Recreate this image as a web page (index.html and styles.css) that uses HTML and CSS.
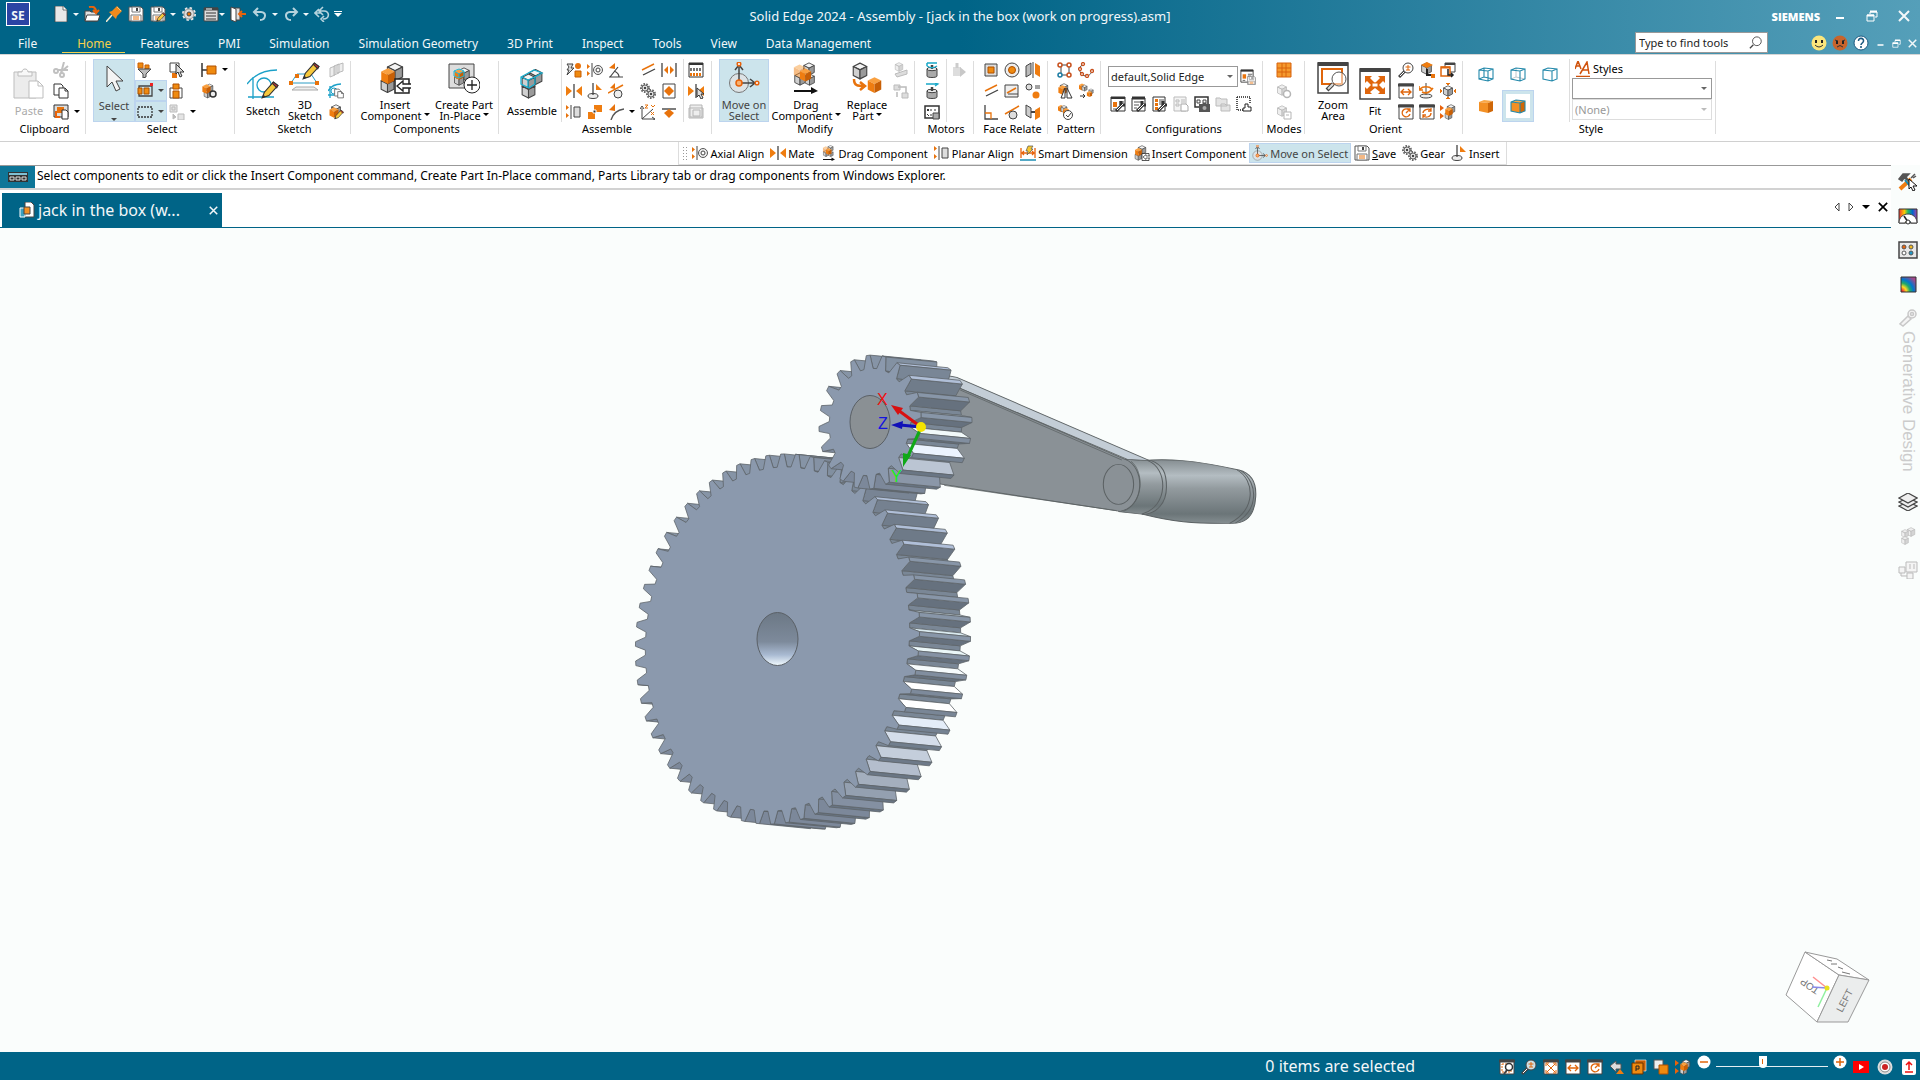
FILE: index.html
```html
<!DOCTYPE html>
<html lang="en">
<head>
    <meta charset="UTF-8">
    <meta name="viewport" content="width=device-width, initial-scale=1.0">
    <title>Solid Edge 2024 - Assembly</title>
    <link rel="stylesheet" href="styles.css">
</head>
<body>

<!-- icon sprite -->
<svg class="sprite" aria-hidden="true">
    <defs>
        <linearGradient id="metal" x1="0" y1="0" x2="0" y2="1">
            <stop offset="0" stop-color="#858d91"/><stop offset=".25" stop-color="#b4bdc2"/>
            <stop offset=".45" stop-color="#939b9f"/><stop offset=".85" stop-color="#6b7578"/><stop offset="1" stop-color="#858e91"/>
        </linearGradient>
        <linearGradient id="bore" x1="0" y1="0" x2="0" y2="1">
            <stop offset="0" stop-color="#6c7885"/><stop offset=".55" stop-color="#7d8a9b"/>
            <stop offset=".8" stop-color="#a9bad2"/><stop offset="1" stop-color="#f2fbff"/>
        </linearGradient>
        <linearGradient id="rainbow">
            <stop offset="0" stop-color="#e33"/><stop offset=".3" stop-color="#fc0"/><stop offset=".5" stop-color="#2b6"/>
            <stop offset=".75" stop-color="#06c"/><stop offset="1" stop-color="#a4a"/>
        </linearGradient>
        <radialGradient id="stress" cx="0" cy="1" r="1.2">
            <stop offset=".1" stop-color="#e33"/><stop offset=".3" stop-color="#fd2"/><stop offset=".5" stop-color="#2a6"/>
            <stop offset=".7" stop-color="#07c"/><stop offset="1" stop-color="#a3488c"/>
        </radialGradient>
    </defs>

    <symbol id="cube-o" viewBox="0 0 16 16"><path fill="#f9a040" d="M8 1l6 3-6 3-6-3z"/><path fill="#ef7d10" d="M2 4l6 3v8l-6-3z"/><path fill="#c85f05" d="M14 4v8l-6 3V7z"/></symbol>
    <symbol id="cube-g" viewBox="0 0 16 16"><g stroke="#444" stroke-linejoin="round"><path fill="#f4f4f4" d="M8 1l6 3-6 3-6-3z"/><path fill="#d0d0d0" d="M2 4l6 3v8l-6-3z"/><path fill="#9a9a9a" d="M14 4v8l-6 3V7z"/></g></symbol>
    <symbol id="cube-l" viewBox="0 0 16 16"><g stroke="#b8b8b8" stroke-linejoin="round" fill="#eee"><path d="M8 1l6 3-6 3-6-3zM2 4l6 3v8l-6-3z"/><path fill="#d4d4d4" d="M14 4v8l-6 3V7z"/></g></symbol>
    <symbol id="pencil" viewBox="0 0 16 16"><path d="M1 15l2-5 8-9 4 3-8 9z" fill="#f6c83c" stroke="#333"/><path d="M10 2l1-1 4 3-1 2z" fill="#d33" stroke="#333"/><path d="M1 15l1-3 2 2z" fill="#333"/></symbol>
    <symbol id="caret" viewBox="0 0 6 3"><path d="M0 0h6L3 3z" fill="currentColor"/></symbol>
    <symbol id="lens" viewBox="0 0 16 16"><path d="M1 15l6-6" stroke="#444" stroke-width="3"/><path d="M2 14l5-5" stroke="#fff"/><circle cx="10" cy="6" r="5" fill="#fffc" stroke="#444"/></symbol>

    <!-- quick access -->
    <symbol id="new" viewBox="0 0 16 16"><path d="M2 0h8l4 4v12H2z" fill="#e8e8e8" stroke="#444" stroke-width=".8"/><path d="M10 0v4h4" fill="#fff" stroke="#555" stroke-width=".8"/></symbol>
    <symbol id="open" viewBox="0 0 16 16"><path d="M1 5h5l1 1h6v9H1z" fill="#e0e0e0" stroke="#444"/><path d="M3 9h13l-2 6H1z" fill="#fff" stroke="#444"/><path d="M5 1c5-1 7 1 7 5M9 4l3 3 3-3" fill="none" stroke="#e8630c" stroke-width="2"/></symbol>
    <symbol id="pin" viewBox="0 0 16 16"><path d="M0 16l6-7" stroke="#f3ead0" stroke-width="1.5"/><path d="M3 6l3-1 4-4 1-1 5 5-1 1-4 4-1 3z" fill="#f08a1c"/><path d="M11 1l4 4" stroke="#ffc070"/></symbol>
    <symbol id="save" viewBox="0 0 16 16"><path d="M1 1h12l2 2v12H1z" fill="#fff" stroke="#555"/><path d="M4 1h8v5H4zM3 9h10v6H3z" fill="#fff" stroke="#777"/><path d="M9 2v3" stroke="#444" stroke-width="2"/><path d="M5 11h6M5 13h6" stroke="#e8730c"/></symbol>
    <symbol id="saveas" viewBox="0 0 16 16"><use href="#save"/><use href="#pencil" x="6" y="6" width="10" height="10"/></symbol>
    <symbol id="cog" viewBox="0 0 16 16"><circle cx="8" cy="8" r="5.5" fill="#d8d8d8" stroke="#e8e8e8" stroke-width="3" stroke-dasharray="2.2 2.1"/><circle cx="8" cy="8" r="5" fill="#ddd" stroke="#666" stroke-width=".6"/><circle cx="8" cy="8" r="2" fill="#e8730c" stroke="#444"/></symbol>
    <symbol id="panel" viewBox="0 0 16 16"><path d="M1 2h14v13H1z" fill="#ddd" stroke="#444"/><path d="M1 3h14" stroke="#444" stroke-width="3"/><path d="M3 3h6" stroke="#fff"/><path d="M3 7h10M3 10h10M3 13h10" stroke="#333"/></symbol>
    <symbol id="exit" viewBox="0 0 16 16"><path d="M1 2h9v12H1z" fill="#ddd" stroke="#444"/><path d="M1 1l5 2v13l-5-2z" fill="#fff" stroke="#444"/><path d="M16 8H9M12 5L9 8l3 3" fill="none" stroke="#e8630c" stroke-width="2"/></symbol>
    <symbol id="undo" viewBox="0 0 16 16"><path d="M6 2L2 6l4 4M2 6h7c6 0 5 8-1 8" fill="none" stroke="#b5d3dd" stroke-width="2"/></symbol>
    <symbol id="redo" viewBox="0 0 16 16"><path d="M10 2l4 4-4 4M14 6H7c-6 0-5 8 1 8" fill="none" stroke="#b5d3dd" stroke-width="2"/></symbol>
    <symbol id="undos" viewBox="0 0 16 16"><path d="M5 3L1 7l4 4M1 7h6M9 1L5 5l4 4M5 5h5c6 0 6 8-1 8M10 10l-3 3 3 3" fill="none" stroke="#b5d3dd" stroke-width="1.6"/></symbol>

    <!-- window controls -->
    <symbol id="w-min" viewBox="0 0 12 12"><path d="M2 8h8" stroke="#fff" stroke-width="2"/></symbol>
    <symbol id="w-max" viewBox="0 0 12 12"><path d="M4 4V2h7v5H9" fill="none" stroke="#fff"/><path d="M4 1.500h7M1 5.500h7" stroke="#fff" stroke-width="2"/><path d="M1 5h7v6H1z" fill="none" stroke="#fff"/></symbol>
    <symbol id="w-close" viewBox="0 0 12 12"><path d="M1 1l10 10M11 1L1 11" stroke="currentColor" stroke-width="2"/></symbol>
    <symbol id="smile" viewBox="0 0 16 16"><circle cx="8" cy="8" r="7.500" fill="#fbe67c"/><path d="M4 10q4 4 8 0" fill="none" stroke="#333"/><path d="M5 5v3M11 5v3" stroke="#222" stroke-width="2"/></symbol>
    <symbol id="frown" viewBox="0 0 16 16"><circle cx="8" cy="8" r="7.500" fill="#c8642c"/><path d="M5 12q3-3 6 0M3 5l3 1M13 5l-3 1" fill="none" stroke="#333"/><path d="M5 6v3M11 6v3" stroke="#222" stroke-width="2"/></symbol>
    <symbol id="help" viewBox="0 0 16 16"><circle cx="8" cy="8" r="7" fill="#fff" stroke="#1c5a80"/><path d="M5.500 6c0-4 5.500-3 5 0 0 2-2.500 2-2.500 4M8 11v2" fill="none" stroke="#1c5a80" stroke-width="1.600"/></symbol>
    <symbol id="search" viewBox="0 0 16 16"><circle cx="9" cy="6" r="5" fill="none" stroke="#444"/><path d="M5 10l-4 4" stroke="#444" stroke-width="1.500"/></symbol>

    <!-- clipboard / select -->
    <symbol id="paste" viewBox="0 0 32 32"><g fill="#ececec" stroke="#bdbdbd"><path d="M1 4h22v26H1z"/><path fill="#f8f8f8" d="M5 8V4h4c0-4 6-4 6 0h4v4z"/><path fill="#fff" d="M16 13h9l5 5v12H16zM25 13v5h5"/></g></symbol>
    <symbol id="cut" viewBox="0 0 16 16"><g fill="none" stroke="#c0c0c0" stroke-width="2"><circle cx="3" cy="9" r="2"/><circle cx="9" cy="13" r="2"/><path d="M5 8h10M8 11L11 0M9 9l6-5"/></g></symbol>
    <symbol id="copy" viewBox="0 0 16 16"><g fill="#fff" stroke="#333"><path d="M1 1h7l2 2v9H1z"/><path d="M6 5h6l3 3v7H6zM12 5v3h3"/></g></symbol>
    <symbol id="pastesp" viewBox="0 0 16 16"><path d="M1 1h14v12H1z" fill="#ddd" stroke="#333"/><path d="M4 3h7v6H4z" fill="#e8730c"/><path d="M3 7v6h4" fill="none" stroke="#e8630c" stroke-width="2"/><path d="M9 6h4l2 2v7H9z" fill="#fff" stroke="#333"/></symbol>
    <symbol id="arrow" viewBox="0 0 32 32"><path d="M9 3v21l5-5 4 9 4-2-4-8h7z" fill="#f4f4f4" stroke="#444" stroke-linejoin="round"/></symbol>
    <symbol id="filter" viewBox="0 0 16 16"><path d="M1 1h5v5H1zM8 3h4v4H8z" fill="#ef8a10" stroke="#c85f05"/><path d="M1 7h13l-5 5v3l-3 1v-4z" fill="#bbb" stroke="#444"/></symbol>
    <symbol id="selbox" viewBox="0 0 16 16"><path d="M2 3h13v10H2z" fill="none" stroke="#444" stroke-width="1.300"/><path d="M1 5h4v6H1zM7 5h5v6H7z" fill="#ef8a10" stroke="#a85000"/><path d="M13 0h3v3h-3z" fill="#e22"/></symbol>
    <symbol id="fence" viewBox="0 0 16 16"><path d="M1 3h14v10H1z" fill="none" stroke="#333" stroke-width="1.300" stroke-dasharray="2 1"/></symbol>
    <symbol id="seltop" viewBox="0 0 16 16"><path d="M1 1h9v9H1z" fill="#fff" stroke="#444"/><path d="M3 11h5v5H3z" fill="#e8730c"/><path d="M7 2v10l2-2 2 5 2-1-2-4h4z" fill="#ddd" stroke="#333"/></symbol>
    <symbol id="selstack" viewBox="0 0 16 16"><path d="M1 5h12v10H1z" fill="none" stroke="#444"/><path d="M4 1h6v5H4zM4 8h6v7H4z" fill="#ef8a10" stroke="#b05000"/></symbol>
    <symbol id="selgray" viewBox="0 0 16 16"><g fill="#e4e4e4" stroke="#bbb"><path d="M1 1h7v7H1zM3 3h3v3H3zM9 10h6v6H9z"/><path fill="#bbb" d="M4 10l3 3-3 2z"/></g></symbol>
    <symbol id="selnext" viewBox="0 0 16 16"><path d="M1 1v14M1 8h5" stroke="#333" stroke-width="1.500"/><path d="M6 4h9v8H6z" fill="#ef8a10" stroke="#b05000"/></symbol>
    <symbol id="selgear" viewBox="0 0 16 16"><use href="#cube-g" x="4" y="0" width="9" height="10"/><use href="#cube-g" y="6" x="2" width="9" height="10"/><use href="#cube-o" width="11" height="12"/><circle cx="12" cy="11" r="3" fill="#eee" stroke="#333" stroke-width="1.500"/></symbol>

    <!-- sketch / components -->
    <symbol id="sketch" viewBox="0 0 32 32"><g fill="none" stroke="#1ba0c8" stroke-width="1.300"><path d="M6 31V9M1 29h26M0 16C8 6 18 2 30 2"/><circle cx="17" cy="17" r="7"/></g><use href="#pencil" x="14" y="13" width="18" height="18"/></symbol>
    <symbol id="sketch3d" viewBox="0 0 32 32"><path d="M2 21L8 12h14l6 9z" fill="none" stroke="#2c9cc4"/><path d="M7 25h18l4 3H3z" fill="#eee" stroke="#aaa"/><path d="M0 19h4v4H0zM6 12h4v4H6zM26 19h4v4h-4z" fill="#e8730c"/><use href="#pencil" x="13" y="0" width="18" height="18"/></symbol>
    <symbol id="planes" viewBox="0 0 16 16"><path d="M2 6l5-2v9l-5 2zM6 4l5-2v9l-5 2zM9 3l6-2v8l-6 2z" fill="#eee" stroke="#bbb"/></symbol>
    <symbol id="skcopy" viewBox="0 0 16 16"><path d="M2 15V3M0 12h6M0 8C3 3 8 1 13 1" fill="none" stroke="#1ba0c8" stroke-width="1.300"/><circle cx="6" cy="8" r="3" fill="none" stroke="#1ba0c8"/><use href="#copy" x="6" y="5" width="10" height="11"/></symbol>
    <symbol id="cubepen" viewBox="0 0 16 16"><use href="#cube-g" x="2" width="12" height="12"/><use href="#cube-o" y="2" width="12" height="13"/><use href="#pencil" x="6" y="5" width="10" height="11"/></symbol>
    <symbol id="insert" viewBox="0 0 32 32"><use href="#cube-g" x="6" width="20" height="20"/><use href="#cube-g" y="14" width="17" height="18"/><use href="#cube-o" y="5" width="18" height="18"/><path d="M16 17h14v14H16z" fill="#fff" stroke="#222" stroke-width="1.500"/><path d="M32 22h-8v-3l-6 5 6 5v-3h8" fill="#fff" stroke="#222" stroke-width="1.300"/></symbol>
    <symbol id="create" viewBox="0 0 32 32"><path d="M1 2h25v24H1z" fill="#ddd" stroke="#444"/><use href="#cube-g" x="9" y="4" width="14" height="16"/><use href="#cube-g" x="5" y="12" width="12" height="12"/><use href="#cube-o" x="5" y="6" width="12" height="13"/><path d="M6 9l5-2 5 2v5l-5 2-5-2zM6 9l5 3 5-3M11 12v4" fill="none" stroke="#20b8d8"/><circle cx="24" cy="23" r="8" fill="#fff" stroke="#222"/><path d="M24 18v10M19 23h10" stroke="#222" stroke-width="1.300"/></symbol>
    <symbol id="assemble" viewBox="0 0 32 32"><use href="#cube-g" x="11" y="0" width="17" height="18"/><use href="#cube-g" x="3" y="14" width="19" height="17"/><use href="#cube-g" x="3" y="5" width="19" height="17"/><path d="M5 9l13-7 8 3-7 4v7l-6 4-8-4zM5 9l7 3 7-3M12 12v8" fill="none" stroke="#1bb0d0" stroke-width="1.300"/></symbol>

    <!-- assemble relations -->
    <symbol id="flash" viewBox="0 0 16 16"><path d="M1 2h6L5 6h3l-7 7 2-5H1l2-3z" fill="#ddd" stroke="#444"/><circle cx="12" cy="4" r="3" fill="#e8730c"/><path d="M9 9h6v6H9z" fill="#ef8a10" stroke="#c85f05"/></symbol>
    <symbol id="axial" viewBox="0 0 16 16"><path d="M0 2l3 2.500L0 7zM0 9l3 2.500L0 14z" fill="#e8730c"/><path d="M5 1v14" stroke="#444"/><circle cx="11" cy="8" r="4.500" fill="#eee" stroke="#555"/><circle cx="11" cy="8" r="2" fill="#fff" stroke="#444"/></symbol>
    <symbol id="angle" viewBox="0 0 16 16"><path d="M1 15h14M2 15l8-10M6 9q5 2 5 6" fill="none" stroke="#444" stroke-width="1.200"/><path d="M1 6l6-5v6z" fill="#e8730c"/></symbol>
    <symbol id="parallel" viewBox="0 0 16 16"><path d="M2 8l12-6" stroke="#e8730c" stroke-width="1.500"/><path d="M3 13l12-6" stroke="#444" stroke-width="1.300"/></symbol>
    <symbol id="center" viewBox="0 0 16 16"><path d="M1 1v14M15 1v14" stroke="#444" stroke-width="1.300"/><path d="M3 8l4-4v8zM13 8L9 4v8z" fill="#e8730c"/></symbol>
    <symbol id="mate" viewBox="0 0 16 16"><path d="M0 3l6 5-6 5zM16 3l-6 5 6 5z" fill="#ef7d10"/><path d="M8 1v14" stroke="#444" stroke-width="1.300"/></symbol>
    <symbol id="ins" viewBox="0 0 16 16"><ellipse cx="6" cy="13" rx="5" ry="2.500" fill="#eee" stroke="#444"/><path d="M6 0v12" stroke="#444" stroke-width="1.300"/><path d="M9 1l6 6H9z" fill="#ef7d10"/></symbol>
    <symbol id="tangent" viewBox="0 0 16 16"><path d="M0 10L15 2" stroke="#e8730c" stroke-width="1.500"/><path d="M2 5l5-5v6z" fill="#e8730c"/><circle cx="10" cy="11" r="4" fill="#eee" stroke="#444"/></symbol>
    <symbol id="gears" viewBox="0 0 16 16"><g fill="none" stroke="#666" stroke-width="2" stroke-dasharray="1.600 1.200"><circle cx="5" cy="5" r="4"/><circle cx="11" cy="11" r="4"/></g><g fill="#ddd" stroke="#666"><circle cx="5" cy="5" r="3"/><circle cx="11" cy="11" r="3"/></g><path d="M5 4v2M11 10v2" stroke="#444" stroke-width="2"/></symbol>
    <symbol id="centerbox" viewBox="0 0 16 16"><path d="M2 1h12v14H2z" fill="#fff" stroke="#444"/><path d="M8 3l5 5-5 5-5-5z" fill="#e8730c"/></symbol>
    <symbol id="planar" viewBox="0 0 16 16"><path d="M0 1l3 2.500L0 6zM0 9l3 2.500L0 14z" fill="#e8730c"/><path d="M5 1v14" stroke="#444"/><path d="M8 3h6v10H8z" fill="#ddd" stroke="#444"/></symbol>
    <symbol id="connect" viewBox="0 0 16 16"><path d="M7 1h8v7H7zM1 8h7v7H1z" fill="#ef7d10"/><path d="M6 6h3v3H6z" fill="#333" stroke="#fff"/></symbol>
    <symbol id="path" viewBox="0 0 16 16"><path d="M3 16C5 9 9 6 16 5" fill="none" stroke="#555" stroke-width="1.400"/><path d="M1 6l6-6v7z" fill="#e8730c"/></symbol>
    <symbol id="csys" viewBox="0 0 16 16"><path d="M2 4v11h12M2 15L13 5M0 5l2-3 2 3M12 13l3 2-3 2" fill="none" stroke="#444"/><path d="M5 1h3L5 4h3M11 1l2 2 2-2M11 8l3 3M14 8l-3 3" fill="none" stroke="#e8730c"/></symbol>
    <symbol id="plane" viewBox="0 0 16 16"><path d="M1 5h14" stroke="#444" stroke-width="1.400"/><path d="M8 5l5 4-5 5-5-5z" fill="#e8730c"/></symbol>
    <symbol id="relgrid" viewBox="0 0 16 16"><path d="M1 1h14v14H1z" fill="#fff" stroke="#333"/><path d="M1 2h14" stroke="#333" stroke-width="2"/><path d="M3 6v3M6 6v3M9 6v3M12 6v3" stroke="#444" stroke-width="1.500"/><path d="M3 11v3M6 11v3M9 11v3M12 11v3" stroke="#e8730c" stroke-width="2"/></symbol>
    <symbol id="matesel" viewBox="0 0 16 16"><use href="#mate"/><path d="M9 5v9l2-2 2 4 2-1-2-4h3z" fill="#ddd" stroke="#333"/></symbol>
    <symbol id="relgray" viewBox="0 0 16 16"><path d="M2 1h12v12H2zM1 4h14v10H1zM5 6h7v6H5z" fill="#eee" stroke="#b5b5b5"/></symbol>

    <!-- modify / motors -->
    <symbol id="move" viewBox="0 0 32 32"><circle cx="11" cy="21" r="9.500" fill="#dde3e6" stroke="#777"/><path d="M11 19V5M7 8l4-5 4 5M12 21h14M22 17l5 4-5 4" fill="none" stroke="#444" stroke-width="1.500"/><g fill="#fff" stroke="#e8630c" stroke-width="1.500"><circle cx="11" cy="2" r="1.800"/><circle cx="29" cy="21" r="1.800"/><circle cx="11" cy="21" r="3" fill="#f8b070"/></g></symbol>
    <symbol id="drag" viewBox="0 0 32 32"><use href="#cube-g" x="12" y="0" width="14" height="14"/><use href="#cube-g" x="13" y="10" width="13" height="15"/><use href="#cube-g" x="3" y="10" width="14" height="14"/><use href="#cube-o" x="2" y="1" width="15" height="16" opacity=".5"/><use href="#cube-o" x="8" y="5" width="15" height="16"/><path d="M4 28h17v-3l7 4-7 3v-2H4z" fill="#111"/></symbol>
    <symbol id="replace" viewBox="0 0 32 32"><use href="#cube-g" x="-1" y="0" width="20" height="18"/><use href="#cube-o" x="14" y="14" width="19" height="18"/><path d="M3 17c0 7 4 7 10 7M9 20l5 4-5 4" fill="none" stroke="#e8730c" stroke-width="2.500"/></symbol>
    <symbol id="graycubes" viewBox="0 0 16 16"><use href="#cube-l" x="1" width="10" height="10"/><path d="M2 12l12-4v4L4 15z" fill="#ddd" stroke="#bbb"/></symbol>
    <symbol id="graymove" viewBox="0 0 16 16"><path d="M1 2h6v5H1zM9 10h6v5H9z" fill="#ddd" stroke="#bbb"/><path d="M4 14V9M5 4h8v6" fill="none" stroke="#bbb" stroke-width="1.500"/></symbol>
    <symbol id="motor" viewBox="0 0 16 16"><path d="M3 7c0-2 10-2 10 0v7c0 2-10 2-10 0z" fill="#aaa" stroke="#444"/><ellipse cx="8" cy="7" rx="5" ry="1.700" fill="#eee" stroke="#444"/><path d="M8 7V3" stroke="#444" stroke-width="2.500"/><path d="M3 1h10M3 4c3 2 7 2 10 0M3 1v3" fill="none" stroke="#19a8c8" stroke-width="1.500"/></symbol>
    <symbol id="motor2" viewBox="0 0 16 16"><path d="M3 8c0-2 10-2 10 0v6c0 2-10 2-10 0z" fill="#aaa" stroke="#444"/><ellipse cx="8" cy="8" rx="5" ry="1.700" fill="#eee" stroke="#444"/><path d="M8 8V4" stroke="#444" stroke-width="2.500"/><path d="M2 1h11M11 0l3 1-3 2" fill="none" stroke="#19a8c8" stroke-width="1.300"/></symbol>
    <symbol id="vartab" viewBox="0 0 16 16"><path d="M1 2h14v12H1z" fill="#fff" stroke="#333" stroke-width="1.500"/><path d="M3 5l2 2M5 5L3 7M3 10l2 2M7 5v2M10 6h2M7 10v2" stroke="#333"/><path d="M9 9h6v6H9z" fill="#aaa" stroke="#444"/></symbol>
    <symbol id="playgray" viewBox="0 0 16 16"><path d="M2 5h8v9H2z" fill="#ddd"/><path d="M6 1v5" stroke="#ccc" stroke-width="3"/><path d="M9 5l6 5-6 5z" fill="#c8c8c8"/></symbol>

    <!-- face relate / pattern -->
    <symbol id="f-cop" viewBox="0 0 16 16"><path d="M2 2h12v12H2z" fill="#ddd" stroke="#444"/><path d="M5 5h6v6H5z" fill="#ef8a10" stroke="#b05000"/></symbol>
    <symbol id="f-con" viewBox="0 0 16 16"><circle cx="8" cy="8" r="7" fill="#eee" stroke="#444"/><circle cx="8" cy="8" r="3.500" fill="#ef8a10" stroke="#b05000"/></symbol>
    <symbol id="f-sym" viewBox="0 0 16 16"><path d="M1 4l5-3v11l-5 3z" fill="#bbb" stroke="#444"/><path d="M8 0v16" stroke="#444"/><path d="M10 1l5 3v11l-5-3z" fill="#ef7d10"/></symbol>
    <symbol id="f-off" viewBox="0 0 16 16"><path d="M1 2h13v12H1z" fill="#eee" stroke="#444"/><path d="M3 10l9-5" stroke="#e8730c" stroke-width="1.500"/><path d="M4 11h10" stroke="#444"/></symbol>
    <symbol id="f-eq" viewBox="0 0 16 16"><circle cx="4" cy="4" r="3" fill="#ddd" stroke="#444"/><path d="M10 3h5M10 5h5" stroke="#444"/><circle cx="11" cy="12" r="3.500" fill="#ef7d10"/></symbol>
    <symbol id="f-perp" viewBox="0 0 16 16"><path d="M2 1v14h13" fill="none" stroke="#444" stroke-width="1.300"/><path d="M2 9h6v6" fill="none" stroke="#e8730c" stroke-width="1.300"/></symbol>
    <symbol id="f-tan" viewBox="0 0 16 16"><path d="M1 10L15 2" stroke="#e8730c" stroke-width="1.500"/><circle cx="9" cy="11" r="4" fill="#ddd" stroke="#444"/></symbol>
    <symbol id="f-par" viewBox="0 0 16 16"><path d="M1 1l5 3v10l-5-3z" fill="#ccc" stroke="#444"/><path d="M6 8h5" stroke="#444" stroke-width="2"/><path d="M10 6l5-3v10l-5 3z" fill="#ef7d10"/></symbol>
    <symbol id="p-rect" viewBox="0 0 16 16"><path d="M4 3h8M4 13h8M4 3v10M12 3v10" stroke="#444"/><g fill="#fff" stroke="#c8501c" stroke-width="1.500"><circle cx="3" cy="3" r="2"/><circle cx="12" cy="3" r="2"/><circle cx="12" cy="13" r="2"/><circle cx="3" cy="13" r="2" stroke="#1b7ca3"/></g></symbol>
    <symbol id="p-curve" viewBox="0 0 16 16"><path d="M5 2C-1 6 2 14 8 14c4 0 5-3 6-5" fill="none" stroke="#444"/><g fill="#fff" stroke="#c8501c" stroke-width="1.300"><circle cx="5" cy="2" r="1.500"/><circle cx="2" cy="7" r="1.500"/><circle cx="4" cy="12" r="1.500"/><circle cx="9" cy="14" r="1.500"/><circle cx="14" cy="9" r="1.500"/></g></symbol>
    <symbol id="p-mirror" viewBox="0 0 16 16"><use href="#cube-g" x="2" width="10" height="10"/><use href="#cube-o" y="1" width="11" height="12"/><path d="M8 15V5l-4 10zM10 15V5l5 10z" fill="#fff" stroke="#333"/></symbol>
    <symbol id="p-dup" viewBox="0 0 16 16"><use href="#cube-o" width="8" height="8"/><use href="#cube-g" x="3" y="1" width="7" height="8"/><use href="#cube-g" x="10" y="5" width="6" height="7"/><use href="#cube-o" x="8" y="7" width="7" height="8"/><path d="M2 13h4M5 11l2 2-2 2" fill="none" stroke="#333"/></symbol>
    <symbol id="p-check" viewBox="0 0 16 16"><use href="#cube-o" width="8" height="9"/><use href="#cube-g" x="3" y="1" width="8" height="8"/><use href="#cube-o" x="5" y="3" width="8" height="9"/><circle cx="11" cy="11" r="4.500" fill="#fff" stroke="#444"/><path d="M9 11l2 2 3-4" fill="none" stroke="#444"/></symbol>

    <!-- configurations / modes -->
    <symbol id="wrench" viewBox="0 0 16 16"><path d="M6 15l7-7M11 5v4h4" fill="none" stroke="#333" stroke-width="3"/><path d="M7 14l6-6" stroke="#fff"/></symbol>
    <symbol id="cfg" viewBox="0 0 16 16"><path d="M1 1h14v14H1z" fill="#fff" stroke="#333"/><path d="M1 2h14" stroke="#333" stroke-width="2"/><path d="M3 6h4v5H3z" fill="#e8730c"/><path d="M9 6h5M9 8h4M3 13h3" stroke="#555"/></symbol>
    <symbol id="cfg-save" viewBox="0 0 16 16"><use href="#cfg" width="14" height="14"/><use href="#save" x="7" y="7" width="9" height="9"/></symbol>
    <symbol id="cfg-tool" viewBox="0 0 16 16"><use href="#cfg"/><use href="#wrench"/></symbol>
    <symbol id="cfg-edit" viewBox="0 0 16 16"><path d="M1 2h13v13H1z" fill="#fff" stroke="#333"/><path d="M1 2h13" stroke="#333" stroke-width="3"/><path d="M3 6h8M3 9h5M3 12h3" stroke="#555"/><use href="#wrench"/></symbol>
    <symbol id="cfg-list" viewBox="0 0 16 16"><path d="M1 1h12v14H1z" fill="#fff" stroke="#333"/><path d="M3 3h3v3H3zM3 7h3v3H3zM3 11h3v3H3z" fill="#e8730c"/><path d="M7 4h5M7 6h4M7 8h3" stroke="#555"/><use href="#wrench"/></symbol>
    <symbol id="cfg-gray" viewBox="0 0 16 16"><path d="M1 1h12v14H1z" fill="#f4f4f4" stroke="#bbb"/><path d="M3 4h3v2H3zM3 8h3v2H3zM8 4h4M8 6h4" stroke="#bbb" fill="none"/><path d="M8 8h5l2 2v5H8z" fill="#fff" stroke="#aaa"/></symbol>
    <symbol id="cfg-cam" viewBox="0 0 16 16"><path d="M1 1h13v10H1z" fill="#fff" stroke="#333" stroke-width="1.500"/><path d="M3 4h3v3H3zM9 4h3v3H9z" fill="none" stroke="#444"/><path d="M5 8h3l1-1h3l1 1h3v8H5z" fill="#555"/><circle cx="10.500" cy="12" r="2" fill="#aaa"/></symbol>
    <symbol id="cfg-fold" viewBox="0 0 16 16"><path d="M1 2h4l1 1h6v7H1zM6 8h4l1 1h4v6H6z" fill="#e4e4e4" stroke="#bbb"/></symbol>
    <symbol id="cfg-zone" viewBox="0 0 16 16"><path d="M1 1h13v6M1 1v13h6" fill="none" stroke="#222" stroke-width="1.500" stroke-dasharray="1 1"/><path d="M9 8h3v3h3v4H7v-3h2z" fill="#fff" stroke="#222"/></symbol>
    <symbol id="m-grid" viewBox="0 0 16 16"><path d="M1 1h14v14H1z" fill="#f59a2e" stroke="#d8620c"/><path d="M1 6h14M1 10h14M6 1v14M10 1v14" stroke="#d8620c"/></symbol>
    <symbol id="m-ref" viewBox="0 0 16 16"><use href="#cube-l" width="12" height="14"/><circle cx="11" cy="11" r="3.500" fill="#fff" stroke="#b5b5b5" stroke-width="1.500"/></symbol>
    <symbol id="m-save" viewBox="0 0 16 16"><use href="#cube-l" width="12" height="14"/><path d="M8 8h7v7H8zM10 11h3" fill="#fff" stroke="#b5b5b5"/></symbol>

    <!-- orient -->
    <symbol id="zoomarea" viewBox="0 0 32 32"><path d="M1 1h30v30H1z" fill="#fff" stroke="#444" stroke-width="1.500"/><path d="M1 2h30" stroke="#444" stroke-width="4"/><path d="M5 7h20v15H5z" fill="none" stroke="#e0660c" stroke-width="2"/><path d="M10 28l6-6" stroke="#444" stroke-width="4"/><path d="M11 27l5-5" stroke="#ddd" stroke-width="2"/><circle cx="22" cy="17" r="7" fill="#fff8" stroke="#555"/></symbol>
    <symbol id="fit" viewBox="0 0 32 32"><path d="M1 1h30v30H1z" fill="#fff" stroke="#444" stroke-width="1.500"/><path d="M1 2h30" stroke="#444" stroke-width="4"/><path d="M6 8h7l-2 2 5 5 5-5-2-2h7v7l-2-2-4 4 4 4 2-2v7h-7l2-2-5-4-5 4 2 2H6v-7l2 2 4-4-4-4-2 2z" fill="#e0660c"/><path d="M13 15h6v4h-6z" fill="#fff" stroke="#e0660c"/></symbol>
    <symbol id="o-zoom" viewBox="0 0 16 16"><use href="#lens"/><path d="M10 3v5M7.500 5h5M8 8h4" stroke="#e0660c"/></symbol>
    <symbol id="o-look" viewBox="0 0 16 16"><use href="#cube-g" x="1" width="13" height="13"/><path d="M8 0l6 3-6 3-6-3z" fill="#ef7d10"/><path d="M8 7v6h5" fill="none" stroke="#222" stroke-width="2"/><path d="M12 12h4v4h-4z" fill="#e8730c"/></symbol>
    <symbol id="o-view" viewBox="0 0 16 16"><path d="M5 1h10v9H5z" fill="#fff" stroke="#444"/><path d="M5 2h10" stroke="#444" stroke-width="2"/><path d="M1 5h9v9H1z" fill="#fff" stroke="#e0660c" stroke-width="1.500"/><path d="M1 5.500h9" stroke="#e0660c" stroke-width="2"/><path d="M8 7v6h5M11 11l2 2-2 2" fill="none" stroke="#222" stroke-width="1.500"/></symbol>
    <symbol id="win" viewBox="0 0 16 16"><path d="M1 1h14v14H1z" fill="#fff" stroke="#444"/><path d="M0 2h16" stroke="#444" stroke-width="3"/></symbol>
    <symbol id="o-pan" viewBox="0 0 16 16"><use href="#win"/><path d="M3 9h10M6 6L3 9l3 3M10 6l3 3-3 3" fill="none" stroke="#e0660c" stroke-width="1.300"/></symbol>
    <symbol id="o-spin" viewBox="0 0 16 16"><ellipse cx="7" cy="13" rx="6" ry="2" fill="#eee" stroke="#444"/><path d="M7 0v12" stroke="#444"/><path d="M1 6c3-3 9-3 12 0M3 9c4 2 8 0 11-4M0 3v4h4" fill="none" stroke="#e8730c" stroke-width="1.600"/></symbol>
    <symbol id="o-cube" viewBox="0 0 16 16"><use href="#cube-g" x="2" y="2" width="12" height="12"/><path d="M6 0h4L8 2zM6 16h4l-2-2zM0 6v4l2-2zM16 6v4l-2-2z" fill="#e8730c" stroke="#e8730c"/></symbol>
    <symbol id="o-rot" viewBox="0 0 16 16"><use href="#win"/><path d="M11 6a4 4 0 1 0 1 4M8 9l4-4M9 5h3v3" fill="none" stroke="#e0660c" stroke-width="1.300"/></symbol>
    <symbol id="o-prev" viewBox="0 0 16 16"><use href="#win"/><path d="M4 9c0-3 5-5 8-3M12 4v3H9M12 9c0 4-5 5-8 3M4 14v-3h3" fill="none" stroke="#e0660c" stroke-width="1.300"/></symbol>
    <symbol id="o-part" viewBox="0 0 16 16"><path d="M0 1l4 3-4 3zM0 9l4 3-4 3z" fill="#e8630c"/><use href="#cube-g" x="6" width="10" height="10"/><use href="#cube-g" x="4" y="7" width="9" height="9"/><use href="#cube-o" x="4" y="2" width="10" height="11"/></symbol>

    <!-- view styles -->
    <symbol id="v-wire" viewBox="0 0 16 16"><path d="M1 4l5-2 9 1v10l-5 2-9-2zM1 4l9 1 5-2M10 5v10M6 2v9l-5 2M6 11l9 2" fill="none" stroke="#2489ab" stroke-width="1.100"/></symbol>
    <symbol id="v-hid" viewBox="0 0 16 16"><path d="M6 2v9l-5 2M6 11l9 2" fill="none" stroke="#c0c8cc"/><path d="M1 4l5-2 9 1v10l-5 2-9-2zM1 4l9 1 5-2M10 5v10" fill="none" stroke="#2489ab" stroke-width="1.100"/></symbol>
    <symbol id="v-vis" viewBox="0 0 16 16"><path d="M1 4l5-2 9 1v10l-5 2-9-2zM1 4l9 1 5-2M10 5v10" fill="none" stroke="#2489ab" stroke-width="1.100"/></symbol>
    <symbol id="v-shade" viewBox="0 0 16 16"><path d="M1 4l5-2 9 1-5 2z" fill="#f9a848"/><path d="M1 4l9 1v10l-9-2z" fill="#f39024"/><path d="M10 5l5-2v10l-5 2z" fill="#cf6708"/></symbol>
    <symbol id="v-both" viewBox="0 0 16 16"><use href="#v-shade"/><use href="#v-vis"/></symbol>
    <symbol id="styles" viewBox="0 0 16 16"><path d="M0 8l3-8 3 8M1 5h4M5 13l7-12 2 12M8 9h5M1 15.500h14" fill="none" stroke="#d0520c" stroke-width="1.500"/></symbol>
    <symbol id="smartdim" viewBox="0 0 16 16"><path d="M1 3v10M15 3v10M2 8h12M4 6L2 8l2 2M12 6l2 2-2 2" fill="none" stroke="#e8630c" stroke-width="1.300"/><path d="M0 15h16" stroke="#1b8cb3" stroke-width="1.500"/><path d="M8 1h5l-2 3h2l-6 6 1-4H6z" fill="#f8c830" stroke="#555" stroke-width=".7"/></symbol>
    <symbol id="doc" viewBox="0 0 16 16"><path d="M6 0h6l3 3v12H6z" fill="#fff" stroke="#444"/><path d="M1 6h5v9H1z" fill="#3ba0c0" stroke="#fff"/><path d="M5 5h6v7H5z" fill="#f39024" stroke="#444"/></symbol>

    <!-- side bar -->
    <symbol id="s-tools" viewBox="0 0 20 18"><path d="M2 16L13 6" stroke="#ef7d10" stroke-width="4"/><path d="M1 6l4-5h6l-3 3 2 3-4-2-2 3zM13 5l4-4M15 5l3-2" fill="#555" stroke="#555" stroke-width="1.500"/><path d="M7 7l6 7" stroke="#1b8cb3" stroke-width="2"/><path d="M11 6v10l2-2 2 4 2-1-2-4h4z" fill="#fff" stroke="#111"/></symbol>
    <symbol id="s-gauge" viewBox="0 0 20 18"><path d="M1 2h18v14H1z" fill="url(#rainbow)" stroke="#333"/><path d="M1 16C1 4 19 4 19 16h-6a3 2 0 0 0-6 0z" fill="#fff" stroke="#444"/><path d="M6 9l4 6" stroke="#222" stroke-width="1.500"/><circle cx="10" cy="15" r="2" fill="#fff" stroke="#333"/></symbol>
    <symbol id="s-lib" viewBox="0 0 20 18"><path d="M1 1h18v16H1z" fill="#e8e8e8" stroke="#444" stroke-width="1.500"/><g stroke="#555"><circle cx="6" cy="6" r="2" fill="#e8630c"/><circle cx="13" cy="6" r="2" fill="#f0b820"/><circle cx="6" cy="12" r="2" fill="#fff"/><circle cx="13" cy="12" r="2" fill="#2098c8"/></g></symbol>
    <symbol id="s-sim" viewBox="0 0 20 18"><path d="M3 2h15v15H3z" fill="url(#stress)" stroke="#333"/></symbol>
    <symbol id="s-gen" viewBox="0 0 20 18"><g fill="#f4f4f4" stroke="#c8c8c8" stroke-width="1.500"><path d="M10 7l-8 8 3 2 8-7z"/><circle cx="14" cy="5" r="4"/><circle cx="14" cy="5" r="1.500"/></g></symbol>
    <symbol id="s-layers" viewBox="0 0 20 18"><g fill="#eee" stroke="#444" stroke-width="1.200"><path d="M1 13l9-4 9 4-9 5z"/><path d="M1 9l9-4 9 4-9 5z"/><path d="M1 5l9-5 9 5-9 5z"/></g></symbol>
    <symbol id="s-cubes" viewBox="0 0 20 18"><use href="#cube-l" x="8" width="10" height="10"/><use href="#cube-l" x="2" y="2" width="10" height="9"/><use href="#cube-l" x="2" y="9" width="10" height="9"/></symbol>
    <symbol id="s-ctl" viewBox="0 0 20 18"><path d="M8 1h11v10H8zM1 6h6v6H1zM9 12h6v6H9zM3 12v3h6M12 3v5M16 3v5" fill="#f4f4f4" stroke="#bbb"/></symbol>

    <!-- status bar -->
    <symbol id="t-area" viewBox="0 0 16 16"><use href="#win"/><path d="M3 5h9v8H3z" fill="none" stroke="#e0660c" stroke-dasharray="2 1"/><path d="M5 15l3-4" stroke="#444" stroke-width="2"/><circle cx="10" cy="8" r="3.500" fill="#fff" stroke="#333" stroke-width="1.500"/></symbol>
    <symbol id="t-fit" viewBox="0 0 16 16"><use href="#win"/><path d="M4 5l8 8M12 5l-8 8M3 7V4h3M10 4h3v3M3 11v3h3M13 11v3h-3" fill="none" stroke="#e0660c"/></symbol>
    <symbol id="t-back" viewBox="0 0 16 16"><path d="M1 7l6-5v3h5v5H7v3z" fill="#ddd" stroke="#555"/><path d="M7 15l4-5 4 5z" fill="#ef7d10"/></symbol>
    <symbol id="t-p" viewBox="0 0 16 16"><path d="M4 1h11v11H4z" fill="#c85f05" stroke="#fff" stroke-width=".6"/><path d="M1 4h11v11H1z" fill="#ef8a10" stroke="#6b3300"/><path d="M5 12V7h3v3H5" fill="none" stroke="#222"/></symbol>
    <symbol id="t-two" viewBox="0 0 16 16"><path d="M1 1h9v9H1z" fill="#eee" stroke="#555"/><path d="M6 6h9v9H6z" fill="#ef8a10" stroke="#b05000"/></symbol>
    <symbol id="t-minus" viewBox="0 0 14 14"><circle cx="7" cy="7" r="6.500" fill="#fff"/><path d="M3 7h8" stroke="#e0660c" stroke-width="1.500"/></symbol>
    <symbol id="t-plus" viewBox="0 0 14 14"><circle cx="7" cy="7" r="6.500" fill="#fff"/><path d="M3 7h8M7 3v8" stroke="#e0660c" stroke-width="1.500"/></symbol>
    <symbol id="t-tube" viewBox="0 0 16 16"><path d="M0 2h16v12H0z" fill="#f00"/><path d="M6 5l5 3-5 3z" fill="#fff"/></symbol>
    <symbol id="t-rec" viewBox="0 0 16 16"><circle cx="8" cy="8" r="7.500" fill="#ddd"/><circle cx="8" cy="8" r="5" fill="#fff" stroke="#888"/><circle cx="8" cy="8" r="3" fill="#c22"/></symbol>
    <symbol id="t-up" viewBox="0 0 16 16"><rect x="1" y="0" width="14" height="16" rx="2" fill="#fff"/><path d="M8 11V3M5 6l3-3 3 3M4 13h8" fill="none" stroke="#e11" stroke-width="1.500"/></symbol>
</svg>

<header class="header">
    <div class="titlebar">
        <div class="quick-access">
            <span class="logo">SE</span>
            <button aria-label="New"><svg><use href="#new"/></svg><svg class="caret"><use href="#caret"/></svg></button>
            <button aria-label="Open"><svg><use href="#open"/></svg></button>
            <button aria-label="Pin"><svg><use href="#pin"/></svg></button>
            <button aria-label="Save"><svg><use href="#save"/></svg></button>
            <button aria-label="Save As"><svg><use href="#saveas"/></svg><svg class="caret"><use href="#caret"/></svg></button>
            <button aria-label="Options"><svg><use href="#cog"/></svg></button>
            <button class="tight" aria-label="Panels"><svg><use href="#panel"/></svg><svg class="caret"><use href="#caret"/></svg></button>
            <button aria-label="Close file"><svg><use href="#exit"/></svg></button>
            <button aria-label="Undo"><svg><use href="#undo"/></svg><svg class="caret"><use href="#caret"/></svg></button>
            <button aria-label="Redo"><svg><use href="#redo"/></svg><svg class="caret"><use href="#caret"/></svg></button>
            <button aria-label="Undo history"><svg><use href="#undos"/></svg><svg class="more" viewBox="0 0 8 6"><path d="M0 0h8v1H0zM0 2h8L4 6z" fill="#fff"/></svg></button>
        </div>
        <div class="title">Solid Edge 2024 - Assembly - [jack in the box (work on progress).asm]</div>
        <div class="window-controls">
            <span class="brand">SIEMENS</span>
            <button aria-label="Minimize"><svg><use href="#w-min"/></svg></button>
            <button aria-label="Restore"><svg><use href="#w-max"/></svg></button>
            <button aria-label="Close"><svg><use href="#w-close"/></svg></button>
        </div>
    </div>
    <div class="menubar">
        <nav class="tabs">
            <a href="#">File</a>
            <a href="#" class="active">Home</a>
            <a href="#">Features</a>
            <a href="#">PMI</a>
            <a href="#">Simulation</a>
            <a href="#">Simulation Geometry</a>
            <a href="#">3D Print</a>
            <a href="#">Inspect</a>
            <a href="#">Tools</a>
            <a href="#">View</a>
            <a href="#">Data Management</a>
        </nav>
        <label class="find">
            <input type="text" placeholder="Type to find tools" aria-label="Type to find tools">
            <svg><use href="#search"/></svg>
        </label>
        <div class="feedback">
            <button aria-label="Like"><svg><use href="#smile"/></svg></button>
            <button aria-label="Dislike"><svg><use href="#frown"/></svg></button>
            <button aria-label="Help"><svg><use href="#help"/></svg></button>
        </div>
        <div class="doc-controls">
            <button aria-label="Minimize document"><svg><use href="#w-min"/></svg></button>
            <button aria-label="Restore document"><svg><use href="#w-max"/></svg></button>
            <button aria-label="Close document"><svg><use href="#w-close"/></svg></button>
        </div>
    </div>
</header>

<div class="ribbon">
    <section class="group g-clipboard">
        <div class="tools">
            <button class="big w44" disabled><svg><use href="#paste"/></svg>Paste</button>
            <div class="stack">
                <button class="tool" aria-label="Cut"><svg><use href="#cut"/></svg></button>
                <button class="tool" aria-label="Copy"><svg><use href="#copy"/></svg></button>
                <button class="tool" aria-label="Paste special"><svg><use href="#pastesp"/></svg><svg class="caret"><use href="#caret"/></svg></button>
            </div>
        </div>
        <h2>Clipboard</h2>
    </section>
    <section class="group g-select">
        <div class="tools">
            <button class="big w42 on"><svg><use href="#arrow"/></svg>Select<svg class="caret low"><use href="#caret"/></svg></button>
            <div class="stack">
                <button class="tool" aria-label="Filter"><svg><use href="#filter"/></svg></button>
                <button class="tool on" aria-label="Selection box"><svg><use href="#selbox"/></svg><svg class="caret"><use href="#caret"/></svg></button>
                <button class="tool on" aria-label="Fence"><svg><use href="#fence"/></svg><svg class="caret"><use href="#caret"/></svg></button>
            </div>
            <div class="stack">
                <button class="tool" aria-label="Top level"><svg><use href="#seltop"/></svg></button>
                <button class="tool" aria-label="Select all"><svg><use href="#selstack"/></svg></button>
                <button class="tool" aria-label="Select parts"><svg><use href="#selgray"/></svg><svg class="caret"><use href="#caret"/></svg></button>
            </div>
            <div class="stack">
                <button class="tool" aria-label="Select next"><svg><use href="#selnext"/></svg><svg class="caret"><use href="#caret"/></svg></button>
                <button class="tool" aria-label="Select manager"><svg><use href="#selgear"/></svg></button>
            </div>
        </div>
        <h2>Select</h2>
    </section>
    <section class="group g-sketch">
        <div class="tools">
            <button class="big w42"><svg><use href="#sketch"/></svg>Sketch</button>
            <button class="big w42"><svg><use href="#sketch3d"/></svg>3D<br>Sketch</button>
            <div class="stack">
                <button class="tool" aria-label="Planes"><svg><use href="#planes"/></svg></button>
                <button class="tool" aria-label="Copy sketch"><svg><use href="#skcopy"/></svg></button>
                <button class="tool" aria-label="Component sketch"><svg><use href="#cubepen"/></svg></button>
            </div>
        </div>
        <h2>Sketch</h2>
    </section>
    <section class="group g-components">
        <div class="tools">
            <button class="big w74"><svg><use href="#insert"/></svg>Insert<br>Component<svg class="caret"><use href="#caret"/></svg></button>
            <button class="big w64"><svg><use href="#create"/></svg>Create Part<br>In-Place<svg class="caret"><use href="#caret"/></svg></button>
        </div>
        <h2>Components</h2>
    </section>
    <section class="group g-assemble">
        <div class="tools">
            <button class="big w52"><svg><use href="#assemble"/></svg>Assemble</button>
            <span class="sep"></span>
            <div class="stack">
                <button class="tool" aria-label="FlashFit"><svg><use href="#flash"/></svg></button>
                <button class="tool" aria-label="Mate"><svg><use href="#mate"/></svg></button>
                <button class="tool" aria-label="Planar Align"><svg><use href="#planar"/></svg></button>
            </div>
            <div class="stack">
                <button class="tool" aria-label="Axial Align"><svg><use href="#axial"/></svg></button>
                <button class="tool" aria-label="Insert"><svg><use href="#ins"/></svg></button>
                <button class="tool" aria-label="Connect"><svg><use href="#connect"/></svg></button>
            </div>
            <div class="stack">
                <button class="tool" aria-label="Angle"><svg><use href="#angle"/></svg></button>
                <button class="tool" aria-label="Tangent"><svg><use href="#tangent"/></svg></button>
                <button class="tool" aria-label="Path"><svg><use href="#path"/></svg><svg class="caret"><use href="#caret"/></svg></button>
            </div>
            <div class="stack">
                <button class="tool" aria-label="Parallel"><svg><use href="#parallel"/></svg></button>
                <button class="tool" aria-label="Gear"><svg><use href="#gears"/></svg></button>
                <button class="tool" aria-label="Coordinate systems"><svg><use href="#csys"/></svg></button>
            </div>
            <div class="stack">
                <button class="tool" aria-label="Center-plane"><svg><use href="#center"/></svg></button>
                <button class="tool" aria-label="Rigid set"><svg><use href="#centerbox"/></svg></button>
                <button class="tool" aria-label="Ground"><svg><use href="#plane"/></svg></button>
            </div>
            <span class="sep"></span>
            <div class="stack">
                <button class="tool" aria-label="Relationship assistant"><svg><use href="#relgrid"/></svg></button>
                <button class="tool" aria-label="Capture fit"><svg><use href="#matesel"/></svg></button>
                <button class="tool" aria-label="Assembly relationship manager"><svg><use href="#relgray"/></svg></button>
            </div>
        </div>
        <h2>Assemble</h2>
    </section>
    <section class="group g-modify">
        <div class="tools">
            <button class="big w50 on"><svg><use href="#move"/></svg>Move on<br>Select</button>
            <button class="big w74"><svg><use href="#drag"/></svg>Drag<br>Component<svg class="caret"><use href="#caret"/></svg></button>
            <button class="big w48"><svg><use href="#replace"/></svg>Replace<br>Part<svg class="caret"><use href="#caret"/></svg></button>
            <div class="stack">
                <button class="tool" aria-label="Disperse"><svg><use href="#graycubes"/></svg></button>
                <button class="tool" aria-label="Transfer"><svg><use href="#graymove"/></svg></button>
            </div>
        </div>
        <h2>Modify</h2>
    </section>
    <section class="group g-motors">
        <div class="tools">
            <div class="stack">
                <button class="tool" aria-label="Rotational motor"><svg><use href="#motor"/></svg></button>
                <button class="tool" aria-label="Linear motor"><svg><use href="#motor2"/></svg></button>
                <button class="tool" aria-label="Variable table motor"><svg><use href="#vartab"/></svg></button>
            </div>
            <span class="sep"></span>
            <div class="stack">
                <button class="tool" aria-label="Simulate motor"><svg><use href="#playgray"/></svg></button>
            </div>
        </div>
        <h2>Motors</h2>
    </section>
    <section class="group g-face">
        <div class="tools">
            <div class="stack">
                <button class="tool" aria-label="Coplanar"><svg><use href="#f-cop"/></svg></button>
                <button class="tool" aria-label="Parallel faces"><svg><use href="#parallel"/></svg></button>
                <button class="tool" aria-label="Perpendicular"><svg><use href="#f-perp"/></svg></button>
            </div>
            <div class="stack">
                <button class="tool" aria-label="Concentric"><svg><use href="#f-con"/></svg></button>
                <button class="tool" aria-label="Offset"><svg><use href="#f-off"/></svg></button>
                <button class="tool" aria-label="Tangent faces"><svg><use href="#f-tan"/></svg></button>
            </div>
            <div class="stack">
                <button class="tool" aria-label="Symmetric"><svg><use href="#f-sym"/></svg></button>
                <button class="tool" aria-label="Equal radius"><svg><use href="#f-eq"/></svg></button>
                <button class="tool" aria-label="Aligned"><svg><use href="#f-par"/></svg></button>
            </div>
        </div>
        <h2>Face Relate</h2>
    </section>
    <section class="group g-pattern">
        <div class="tools">
            <div class="stack">
                <button class="tool" aria-label="Pattern"><svg><use href="#p-rect"/></svg></button>
                <button class="tool" aria-label="Mirror components"><svg><use href="#p-mirror"/></svg></button>
                <button class="tool" aria-label="Clone component"><svg><use href="#p-check"/></svg></button>
            </div>
            <div class="stack">
                <button class="tool" aria-label="Pattern along curve"><svg><use href="#p-curve"/></svg></button>
                <button class="tool" aria-label="Duplicate component"><svg><use href="#p-dup"/></svg></button>
            </div>
        </div>
        <h2>Pattern</h2>
    </section>
    <section class="group g-config">
        <div class="tools config">
            <div class="line">
                <span class="drop"><select aria-label="Configuration"><option>default,Solid Edge</option></select></span>
                <button class="tool" aria-label="Save configuration"><svg><use href="#cfg-save"/></svg></button>
            </div>
            <div class="line">
                <button class="tool" aria-label="Display configurations"><svg><use href="#cfg-tool"/></svg></button>
                <button class="tool" aria-label="Edit configuration"><svg><use href="#cfg-edit"/></svg></button>
                <button class="tool" aria-label="Apply configuration"><svg><use href="#cfg-list"/></svg></button>
                <button class="tool" aria-label="Copy configuration"><svg><use href="#cfg-gray"/></svg></button>
                <button class="tool" aria-label="Capture configuration"><svg><use href="#cfg-cam"/></svg></button>
                <button class="tool" aria-label="Configuration folders"><svg><use href="#cfg-fold"/></svg></button>
                <button class="tool" aria-label="Zones"><svg><use href="#cfg-zone"/></svg></button>
            </div>
        </div>
        <h2>Configurations</h2>
    </section>
    <section class="group g-modes">
        <div class="tools">
            <div class="stack">
                <button class="tool" aria-label="Limited update"><svg><use href="#m-grid"/></svg></button>
                <button class="tool" aria-label="Update"><svg><use href="#m-ref"/></svg></button>
                <button class="tool" aria-label="Limited save"><svg><use href="#m-save"/></svg></button>
            </div>
        </div>
        <h2>Modes</h2>
    </section>
    <section class="group g-orient">
        <div class="tools">
            <button class="big w42"><svg><use href="#zoomarea"/></svg>Zoom<br>Area</button>
            <button class="big w42"><svg><use href="#fit"/></svg>Fit</button>
            <div class="stack">
                <button class="tool" aria-label="Zoom"><svg><use href="#o-zoom"/></svg></button>
                <button class="tool" aria-label="Pan"><svg><use href="#o-pan"/></svg></button>
                <button class="tool" aria-label="Rotate"><svg><use href="#o-rot"/></svg></button>
            </div>
            <div class="stack">
                <button class="tool" aria-label="Look at face"><svg><use href="#o-look"/></svg></button>
                <button class="tool" aria-label="Spin about"><svg><use href="#o-spin"/></svg></button>
                <button class="tool" aria-label="Previous view"><svg><use href="#o-prev"/></svg></button>
            </div>
            <div class="stack">
                <button class="tool" aria-label="View orientation"><svg><use href="#o-view"/></svg></button>
                <button class="tool" aria-label="Common views"><svg><use href="#o-cube"/></svg></button>
                <button class="tool" aria-label="Align view"><svg><use href="#o-part"/></svg></button>
            </div>
        </div>
        <h2>Orient</h2>
    </section>
    <section class="group g-style">
        <div class="tools">
            <div class="view-styles">
                <button aria-label="Wire frame"><svg><use href="#v-wire"/></svg></button>
                <button aria-label="Visible and hidden edges"><svg><use href="#v-hid"/></svg></button>
                <button aria-label="Visible edges"><svg><use href="#v-vis"/></svg></button>
                <button aria-label="Shaded"><svg><use href="#v-shade"/></svg></button>
                <button class="picked" aria-label="Shaded with visible edges"><svg><use href="#v-both"/></svg></button>
            </div>
            <span class="sep"></span>
            <div class="style-pick">
                <button class="styles-btn"><svg><use href="#styles"/></svg>Styles</button>
                <span class="drop"><select aria-label="Part style"><option></option></select></span>
                <span class="drop off"><select aria-label="Face style" disabled><option>(None)</option></select></span>
            </div>
        </div>
        <h2>Style</h2>
    </section>
</div>

<div class="command-row">
    <div class="command-bar">
        <span class="grip"></span>
        <button><svg><use href="#axial"/></svg>Axial Align</button>
        <button><svg><use href="#mate"/></svg>Mate</button>
        <button><svg><use href="#drag"/></svg>Drag Component</button>
        <button><svg><use href="#planar"/></svg>Planar Align</button>
        <button><svg><use href="#smartdim"/></svg>Smart Dimension</button>
        <button><svg><use href="#insert"/></svg>Insert Component</button>
        <button class="on"><svg><use href="#move"/></svg>Move on Select</button>
        <button><svg><use href="#save"/></svg><span><u>S</u>ave</span></button>
        <button><svg><use href="#gears"/></svg>Gear</button>
        <button><svg><use href="#ins"/></svg>Insert</button>
    </div>
</div>

<main class="main">
    <div class="work">
        <div class="prompt">
            <button class="prompt-icon" aria-label="Prompt bar options">
                <svg viewBox="0 0 20 10"><path d="M0 0h20v10H0z" fill="#333"/><path d="M1 1h18v2H1z" fill="#7fc0d4"/><path d="M2 5h4v3H2zM8 5h4v3H8zM14 5h4v3h-4z" fill="#333" stroke="#ddd"/></svg>
            </button>
            <span>Select components to edit or click the Insert Component command, Create Part In-Place command, Parts Library tab or drag components from Windows Explorer.</span>
        </div>
        <div class="doc-tabs">
            <div class="doc-tab">
                <svg><use href="#doc"/></svg>
                <span>jack in the box (w...</span>
                <button aria-label="Close tab"><svg><use href="#w-close"/></svg></button>
            </div>
            <div class="tab-nav">
                <button aria-label="Previous tab"><svg viewBox="0 0 6 10"><path d="M5 1v8L1 5z" fill="none" stroke="#444"/></svg></button>
                <button aria-label="Next tab"><svg viewBox="0 0 6 10"><path d="M1 1v8l4-4z" fill="none" stroke="#444"/></svg></button>
                <button aria-label="Tab list"><svg class="caret"><use href="#caret"/></svg></button>
                <button aria-label="Close all"><svg class="x"><use href="#w-close"/></svg></button>
            </div>
        </div>
        <div class="canvas">
            <svg viewBox="0 228 1891 824" role="img" aria-label="Gear train with crank handle">
                <!-- crank handle -->
                <g transform="translate(620 340) scale(.421 .3333)" stroke="#5c6264" stroke-width="2.500">
                    <path d="M1240 362C1300 355 1360 360 1470 390C1500 400 1512 430 1510 470C1508 520 1490 550 1455 550C1360 552 1310 545 1240 522z" fill="url(#metal)"/>
                    <path d="M1466 390C1508 420 1512 510 1448 550M1476 393C1516 430 1518 510 1462 549" fill="none"/>
                    <path d="M1200 358L1262 362C1290 375 1298 400 1298 440C1298 490 1275 520 1245 523L1185 515z" fill="url(#metal)"/>
                    <path d="M1254 362C1302 385 1304 500 1240 522" fill="none"/>
                    <path d="M770 105L800 112L1258 362L1205 358L808 145L760 140z" fill="#c3cdd6"/>
                    <path d="M740 120L808 145L1200 358C1248 380 1248 500 1188 514L740 428z" fill="#8a9196"/>
                    <path d="M1214 364C1246 395 1244 490 1196 514M808 150L1192 360M770 436L1180 512" fill="none" stroke-width="2"/>
                    <ellipse cx="1184" cy="433" rx="36" ry="60" fill="#8a9196"/>
                </g>
                <g id="bigGear"></g>
                <ellipse cx="777.500" cy="639" rx="20.500" ry="26.500" fill="url(#bore)" stroke="#5a6066"/>
                <g id="smallGear"></g>
                <ellipse cx="870" cy="422" rx="20" ry="26.500" fill="#8a9094" stroke="#5a6066"/>
                <!-- triad -->
                <path d="M921 427L898 410" stroke="#d81010" stroke-width="3"/><path d="M891 405l12 3-5 7z" fill="#d81010"/>
                <path d="M921 427L900 425" stroke="#1010b8" stroke-width="3"/><path d="M891 425l12-4-1 8z" fill="#1010b8"/>
                <path d="M920 430L908 456" stroke="#10a818" stroke-width="3"/><path d="M903 467l0-14 8 2z" fill="#10a818"/>
                <circle cx="921" cy="427" r="5" fill="#f4e400"/>
                <g class="axis">
                    <text x="877" y="405" fill="#f01010">X</text>
                    <text x="878" y="429" fill="#1414e0">Z</text>
                    <text x="891" y="482" fill="#14f014">Y</text>
                </g>
                <!-- view cube -->
                <g stroke="#999" stroke-linejoin="round">
                    <path d="M1805 952l34 23-22 47-31-27z" fill="#fff"/>
                    <path d="M1805 952l32 7 32 21-30-5z" fill="#fff"/>
                    <path d="M1839 975l30 5-21 42h-31z" fill="#ebeded"/>
                    <path d="M1827 960l5 1M1831 964l6 0M1838 967l5 2M1842 972l8 2" stroke="#777"/>
                </g>
                <g class="cube-text">
                    <text transform="translate(1820 989) rotate(214)">TOP</text>
                    <text transform="translate(1842 1013) rotate(-62)">LEFT</text>
                </g>
                <path d="M1827 988l-14-11" stroke="#ff9090" stroke-width="1.500"/>
                <path d="M1827 988l-15-1" stroke="#8888e8" stroke-width="1.500"/>
                <path d="M1827 988l-9 19" stroke="#90f0a0" stroke-width="1.500"/>
                <circle cx="1827" cy="988" r="2.500" fill="#e8e020"/>
            </svg>
        </div>
    </div>
    <aside class="sidebar">
        <button aria-label="Tools"><svg><use href="#s-tools"/></svg></button>
        <button aria-label="Performance"><svg><use href="#s-gauge"/></svg></button>
        <button aria-label="Parts library"><svg><use href="#s-lib"/></svg></button>
        <button aria-label="Simulation"><svg><use href="#s-sim"/></svg></button>
        <button class="generative" disabled><svg><use href="#s-gen"/></svg><span>Generative Design</span></button>
        <button aria-label="Layers"><svg><use href="#s-layers"/></svg></button>
        <button aria-label="Alternate assemblies"><svg><use href="#s-cubes"/></svg></button>
        <button aria-label="Sensors"><svg><use href="#s-ctl"/></svg></button>
    </aside>
</main>

<footer class="status">
    <span class="status-text">0 items are selected</span>
    <div class="status-tools">
        <button aria-label="Zoom area"><svg><use href="#t-area"/></svg></button>
        <button aria-label="Zoom"><svg><use href="#o-zoom"/></svg></button>
        <button aria-label="Fit"><svg><use href="#t-fit"/></svg></button>
        <button aria-label="Pan"><svg><use href="#o-pan"/></svg></button>
        <button aria-label="Rotate"><svg><use href="#o-rot"/></svg></button>
        <button aria-label="Sketch view"><svg><use href="#t-back"/></svg></button>
        <button aria-label="View orientation"><svg><use href="#t-p"/></svg></button>
        <button aria-label="View style"><svg><use href="#t-two"/></svg></button>
        <button aria-label="Align view"><svg><use href="#o-part"/></svg></button>
    </div>
    <div class="zoom">
        <button aria-label="Zoom out"><svg><use href="#t-minus"/></svg></button>
        <input type="range" min="0" max="100" value="41" aria-label="Zoom level">
        <button aria-label="Zoom in"><svg><use href="#t-plus"/></svg></button>
    </div>
    <div class="share">
        <button aria-label="YouTube"><svg><use href="#t-tube"/></svg></button>
        <button aria-label="Record"><svg><use href="#t-rec"/></svg></button>
        <button aria-label="Upload"><svg><use href="#t-up"/></svg></button>
    </div>
</footer>

<script src="gears.js"></script>
</body>
</html>
```
FILE: styles.css
```css
* {
    box-sizing: border-box;
}
body {
    margin: 0;
    height: 100vh;
    display: flex;
    flex-direction: column;
    font-family: "Noto Sans", "Open Sans", sans-serif;
    font-size: 12px;
    color: #000;
    background: #fff;
    overflow: hidden;
}
button {
    display: flex;
    align-items: center;
    margin: 0;
    padding: 0;
    border: none;
    background: none;
    font: inherit;
    color: inherit;
    cursor: pointer;
}
svg {
    display: block;
    width: 16px;
    height: 16px;
    flex: none;
}
.sprite {
    position: absolute;
    width: 0;
    height: 0;
}
.caret {
    width: 6px;
    height: 3px;
}

/* header */
.header {
    color: #f2f7f9;
    background: linear-gradient(90deg, #006487 50%, #2a809f 74%, #559fb9 100%);
}
.titlebar {
    display: grid;
    grid-template-columns: 1fr auto 1fr;
    height: 32px;
}
.quick-access {
    display: flex;
    align-items: center;
    height: 28px;
    padding-left: 6px;
}
.logo {
    width: 24px;
    height: 24px;
    margin-right: 20px;
    border: 1px solid #fff;
    background: #2b44a4;
    font-size: 12px;
    font-weight: bold;
    line-height: 26px;
    text-align: center;
}
.quick-access button {
    padding: 0 2px 0 3px;
    gap: 4px;
}
.quick-access button:not(:has(.caret)) {
    padding-right: 3px;
}
.quick-access .tight {
    gap: 0;
}
.quick-access .more {
    width: 8px;
    height: 6px;
}
.title {
    font-size: 13px;
    line-height: 32px;
}
.window-controls {
    display: flex;
    justify-content: flex-end;
    align-items: center;
    height: 32px;
}
.brand {
    font-family: "Open Sans", sans-serif;
    font-size: 11px;
    font-weight: 800;
    color: #fff;
    margin-right: 4px;
}
.window-controls button {
    width: 32px;
    height: 32px;
    justify-content: center;
}
.window-controls svg {
    width: 12px;
    height: 12px;
}
.menubar {
    display: flex;
    height: 22px;
}
.tabs {
    display: flex;
    flex: 1;
    padding-left: 4px;
}
.tabs a {
    padding: 0 14px 0 15px;
    height: 21px;
    line-height: 24px;
    color: inherit;
    text-decoration: none;
    white-space: nowrap;
}
.tabs a:first-child {
    padding-left: 14px;
    margin-right: 11px;
}
.tabs .active {
    color: #f6cf4c;
    border-bottom: 1px solid #f6cf4c;
}
.find {
    display: flex;
    align-items: center;
    width: 133px;
    height: 21px;
    padding-right: 4px;
    border: 1px solid #999;
    background: #fff;
}
.find input {
    flex: 1;
    min-width: 0;
    padding: 0 3px;
    border: none;
    background: none;
    font: inherit;
    font-size: 11px;
    outline: none;
}
.find input::placeholder {
    color: #222;
}
.find svg {
    width: 14px;
    height: 14px;
}
.feedback {
    display: flex;
    gap: 5px;
    margin: 0 3px 0 43px;
}
.doc-controls {
    display: flex;
}
.doc-controls button {
    width: 16px;
    justify-content: center;
}
.doc-controls svg {
    width: 9px;
    height: 9px;
}

/* ribbon */
.ribbon {
    display: flex;
    border-top: 1px solid #d5d5d5;
    border-bottom: 1px solid #d0d0d0;
    padding: 4px 0 6px;
    font-size: 11px;
}
.group {
    flex: none;
    padding-left: 7px;
    background: linear-gradient(#ddd, #ddd) right 2px / 1px 73px no-repeat;
}
.group h2 {
    margin: 0 0 0 -4px;
    font-size: 11px;
    font-weight: normal;
    line-height: 13px;
    text-align: center;
}
.g-clipboard { width: 86px; }
.g-select { width: 149px; }
.g-sketch { width: 116px; }
.g-components { width: 148px; }
.g-assemble { width: 213px; }
.g-modify { width: 203px; }
.g-motors { width: 59px; }
.g-face { width: 74px; }
.g-pattern { width: 53px; }
.g-config { width: 162px; }
.g-modes { width: 42px; }
.g-orient { width: 158px; }
.g-style { width: 253px; }
.g-modes {
    padding-left: 0;
}
.g-modes .tools {
    justify-content: center;
}
.g-modes h2 {
    margin-left: 0;
}
.tools {
    display: flex;
    height: 63px;
}
.sep {
    width: 1px;
    margin: 0 2px 0 3px;
    background: #ddd;
}
.big {
    display: block;
    flex: none;
    padding-top: 2px;
    line-height: 11px;
    text-align: center;
    white-space: nowrap;
}
.big:disabled {
    color: #aaa;
}
.big svg {
    width: 32px;
    height: 32px;
    margin: 0 auto 5px;
}
.big .caret {
    display: inline-block;
    width: 6px;
    height: 3px;
    margin: 0 0 4px 2px;
}
.big .low {
    display: block;
    margin: 7px auto 0;
}
.w42 { width: 42px; }
.w44 { width: 44px; }
.w48 { width: 48px; }
.w50 { width: 50px; }
.w52 { width: 52px; }
.w64 { width: 64px; }
.w74 { width: 74px; }
.on {
    background: #cce4ec;
    outline: 1px solid #bcd4ee;
    outline-offset: -1px;
    color: #444;
}
.stack {
    display: flex;
    flex-direction: column;
    flex: none;
}
.tool {
    height: 21px;
    padding: 0 3px 0 2px;
    gap: 5px;
}
.config {
    flex-direction: column;
    gap: 6px;
    padding-top: 7px;
}
.line {
    display: flex;
    align-items: center;
}
.drop {
    position: relative;
    display: block;
    width: 130px;
}
.drop::after {
    content: "";
    position: absolute;
    right: 5px;
    top: 9px;
    border: 3px solid transparent;
    border-top-color: #666;
    border-bottom: none;
}
.drop select {
    display: block;
    width: 100%;
    height: 21px;
    padding: 0 2px;
    appearance: none;
    border: 1px solid #999;
    border-radius: 0;
    background: #fff;
    font: inherit;
    color: #222;
}
.drop.off select {
    border-color: #ddd;
    color: #999;
    opacity: 1;
}
.drop.off::after {
    border-top-color: #bbb;
}
.view-styles {
    display: grid;
    grid-template-columns: repeat(3, 32px);
    grid-auto-rows: 32px;
    margin: -1px 0;
}
.view-styles button {
    justify-content: center;
}
.picked {
    border: 1px solid #bcd4ee;
    box-shadow: inset 0 0 0 3px #cce4ec;
}
.style-pick .drop {
    width: 140px;
}
.styles-btn {
    height: 19px;
    gap: 2px;
    padding-left: 3px;
}

/* floating command bar */
.command-row {
    display: flex;
    justify-content: center;
    height: 23px;
    padding-left: 265px;
}
.command-bar {
    display: flex;
    align-items: center;
    padding: 0 3px 0 2px;
    border: 1px solid #ddd;
    border-top: none;
    font-size: 11px;
}
.grip {
    width: 5px;
    height: 14px;
    margin: 0 2px 0 1px;
    background: radial-gradient(#999 1px, transparent 1px) 0 0 / 3px 3px;
}
.command-bar button {
    height: 20px;
    padding: 0 3px;
    gap: 2px;
}

/* working area */
.main {
    flex: 1;
    display: flex;
    min-height: 0;
}
.work {
    flex: 1;
    min-width: 0;
    display: flex;
    flex-direction: column;
}
.prompt {
    display: flex;
    height: 25px;
    border-top: 1px solid #999;
    border-bottom: 2px solid #d2d2d2;
    line-height: 20px;
    white-space: nowrap;
}
.prompt-icon {
    width: 35px;
    margin-right: 2px;
    justify-content: center;
    background: #0e7698;
}
.prompt-icon svg {
    width: 20px;
    height: 10px;
}
.doc-tabs {
    display: flex;
    justify-content: space-between;
    height: 38px;
    padding: 3px 0 0 2px;
    border-bottom: 1px solid #006487;
}
.doc-tab {
    display: flex;
    align-items: center;
    width: 220px;
    padding: 0 4px 0 17px;
    gap: 3px;
    background: #006487;
    color: #f2f7f9;
    font-size: 16px;
}
.doc-tab span {
    flex: 1;
    white-space: nowrap;
}
.doc-tab button svg {
    width: 9px;
    height: 9px;
}
.tab-nav {
    display: flex;
    align-items: center;
    gap: 8px;
    padding: 0 3px 6px 0;
}
.tab-nav svg {
    width: 6px;
    height: 10px;
}
.tab-nav .caret {
    width: 8px;
    height: 4px;
}
.tab-nav .x {
    width: 10px;
    height: 10px;
}
.canvas {
    flex: 1;
    min-height: 0;
    background: #fafdfc;
}
.canvas svg {
    width: 100%;
    height: 100%;
}
.axis {
    font-family: "Liberation Sans", sans-serif;
    font-size: 16px;
}
.cube-text {
    font-family: "Liberation Sans", sans-serif;
    font-size: 10px;
    fill: #777;
}
.sidebar {
    display: flex;
    flex-direction: column;
    align-items: center;
    width: 29px;
    padding: 0 1px 0 6px;
    background: #fafdfc;
}
.sidebar button {
    height: 34px;
}
.sidebar svg {
    width: 20px;
    height: 18px;
}
.sidebar .generative {
    height: 184px;
    flex-direction: column;
    padding-top: 8px;
    gap: 4px;
    color: #ccc;
}
.generative span {
    writing-mode: vertical-rl;
    font-family: "Liberation Sans", sans-serif;
    font-size: 17px;
}

/* status bar */
.status {
    display: flex;
    align-items: center;
    justify-content: flex-end;
    height: 28px;
    background: #006487;
    color: #f2f7f9;
}
.status-text {
    margin-right: 84px;
    font-size: 16px;
    line-height: 30px;
}
.status-tools {
    display: flex;
    gap: 6px;
    padding-top: 2px;
}
.zoom {
    display: flex;
    align-items: center;
    gap: 5px;
    height: 20px;
    margin: 0 6px 8px 6px;
}
.zoom svg {
    width: 14px;
    height: 14px;
}
.zoom input {
    appearance: none;
    width: 112px;
    height: 14px;
    margin: 0;
    background: linear-gradient(#e4eef2, #e4eef2) 0 11px / 100% 1px no-repeat;
}
.zoom input::-webkit-slider-thumb {
    appearance: none;
    width: 8px;
    height: 12px;
    border-radius: 0 0 4px 4px;
    background: linear-gradient(#e0660c, #e0660c) 50% 3px / 1px 5px no-repeat #fff;
}
.share {
    display: flex;
    gap: 8px;
    padding: 2px 3px 0 0;
}
```
FILE: gears.js
```js
var NS = "http://www.w3.org/2000/svg";

// axis direction of both gears on screen, front face to back face
var DEPTH = { x: 51, y: 5 };

function mix(a, b, k) {
    k = Math.max(0, Math.min(1, k));
    return "rgb(" + a.map(function (v, i) {
        return Math.round(v + (b[i] - v) * k);
    }).join(",") + ")";
}

// colour of a tooth surface, deg = angle of the tooth (0 right, 90 bottom)
function shade(kind, deg) {
    if (kind === "upper") {
        if (deg < 0) return mix([160, 176, 204], [220, 236, 240], (deg + 60) / 60);
        if (deg < 25) return mix([228, 244, 246], [255, 255, 255], deg / 15);
        return mix([236, 244, 255], [124, 136, 154], (deg - 25) / 42);
    }
    if (kind === "lower") {
        return mix([134, 148, 166], [102, 113, 126], (deg + 80) / 60);
    }
    if (kind === "land") {
        return deg < -25 ? "rgb(176,191,216)" : mix([136, 150, 168], [104, 116, 130], deg / 50);
    }
    return "rgb(122,135,150)";
}

function add(parent, d, fill) {
    var p = document.createElementNS(NS, "path");
    p.setAttribute("d", d);
    p.setAttribute("fill", fill);
    p.setAttribute("stroke", "#5e6469");
    p.setAttribute("stroke-width", "0.8");
    p.setAttribute("stroke-linejoin", "round");
    parent.appendChild(p);
}

function drawGear(id, g) {
    var parent = document.getElementById(id);
    var pitch = Math.PI * 2 / g.teeth;
    var pts = [];

    // offset in pitches, radius ratio, kind of the surface up to the next point
    var profile = [
        [-0.36, g.root, "upper"],
        [-0.12, 1, "land"],
        [0.12, 1, "lower"],
        [0.36, g.root, "root"]
    ];
    for (var i = 0; i < g.teeth; i++) {
        profile.forEach(function (s) {
            var a = g.phase + (i + s[0]) * pitch;
            pts.push({
                x: g.cx + s[1] * (g.rx * Math.cos(a) - g.tilt * Math.sin(a)),
                y: g.cy + s[1] * (g.ry * Math.sin(a) - g.tilt * Math.cos(a)),
                kind: s[2],
                deg: Math.atan2(Math.sin(a), Math.cos(a)) * 180 / Math.PI
            });
        });
    }

    var sides = [];
    pts.forEach(function (p, i) {
        var q = pts[(i + 1) % pts.length];
        var facing = (q.y - p.y) * DEPTH.x - (q.x - p.x) * DEPTH.y;
        if (facing > 0) {
            sides.push({ p: p, q: q, order: (p.x + q.x) * DEPTH.x + (p.y + q.y) * DEPTH.y });
        }
    });
    sides.sort(function (a, b) { return a.order - b.order; });
    sides.forEach(function (s) {
        var d = "M" + s.p.x + " " + s.p.y + "L" + s.q.x + " " + s.q.y +
            "l" + DEPTH.x + " " + DEPTH.y +
            "L" + (s.p.x + DEPTH.x) + " " + (s.p.y + DEPTH.y) + "z";
        add(parent, d, shade(s.p.kind, s.p.deg));
    });

    add(parent, "M" + pts.map(function (p) { return p.x + " " + p.y; }).join("L") + "z", "#8b99ad");
}

drawGear("bigGear", { cx: 777.5, cy: 639, rx: 142, ry: 185, tilt: 5, root: 0.93, teeth: 60, phase: 0 });
drawGear("smallGear", { cx: 870, cy: 422, rx: 51, ry: 67, tilt: 2, root: 0.8, teeth: 20, phase: -0.075 });
```
